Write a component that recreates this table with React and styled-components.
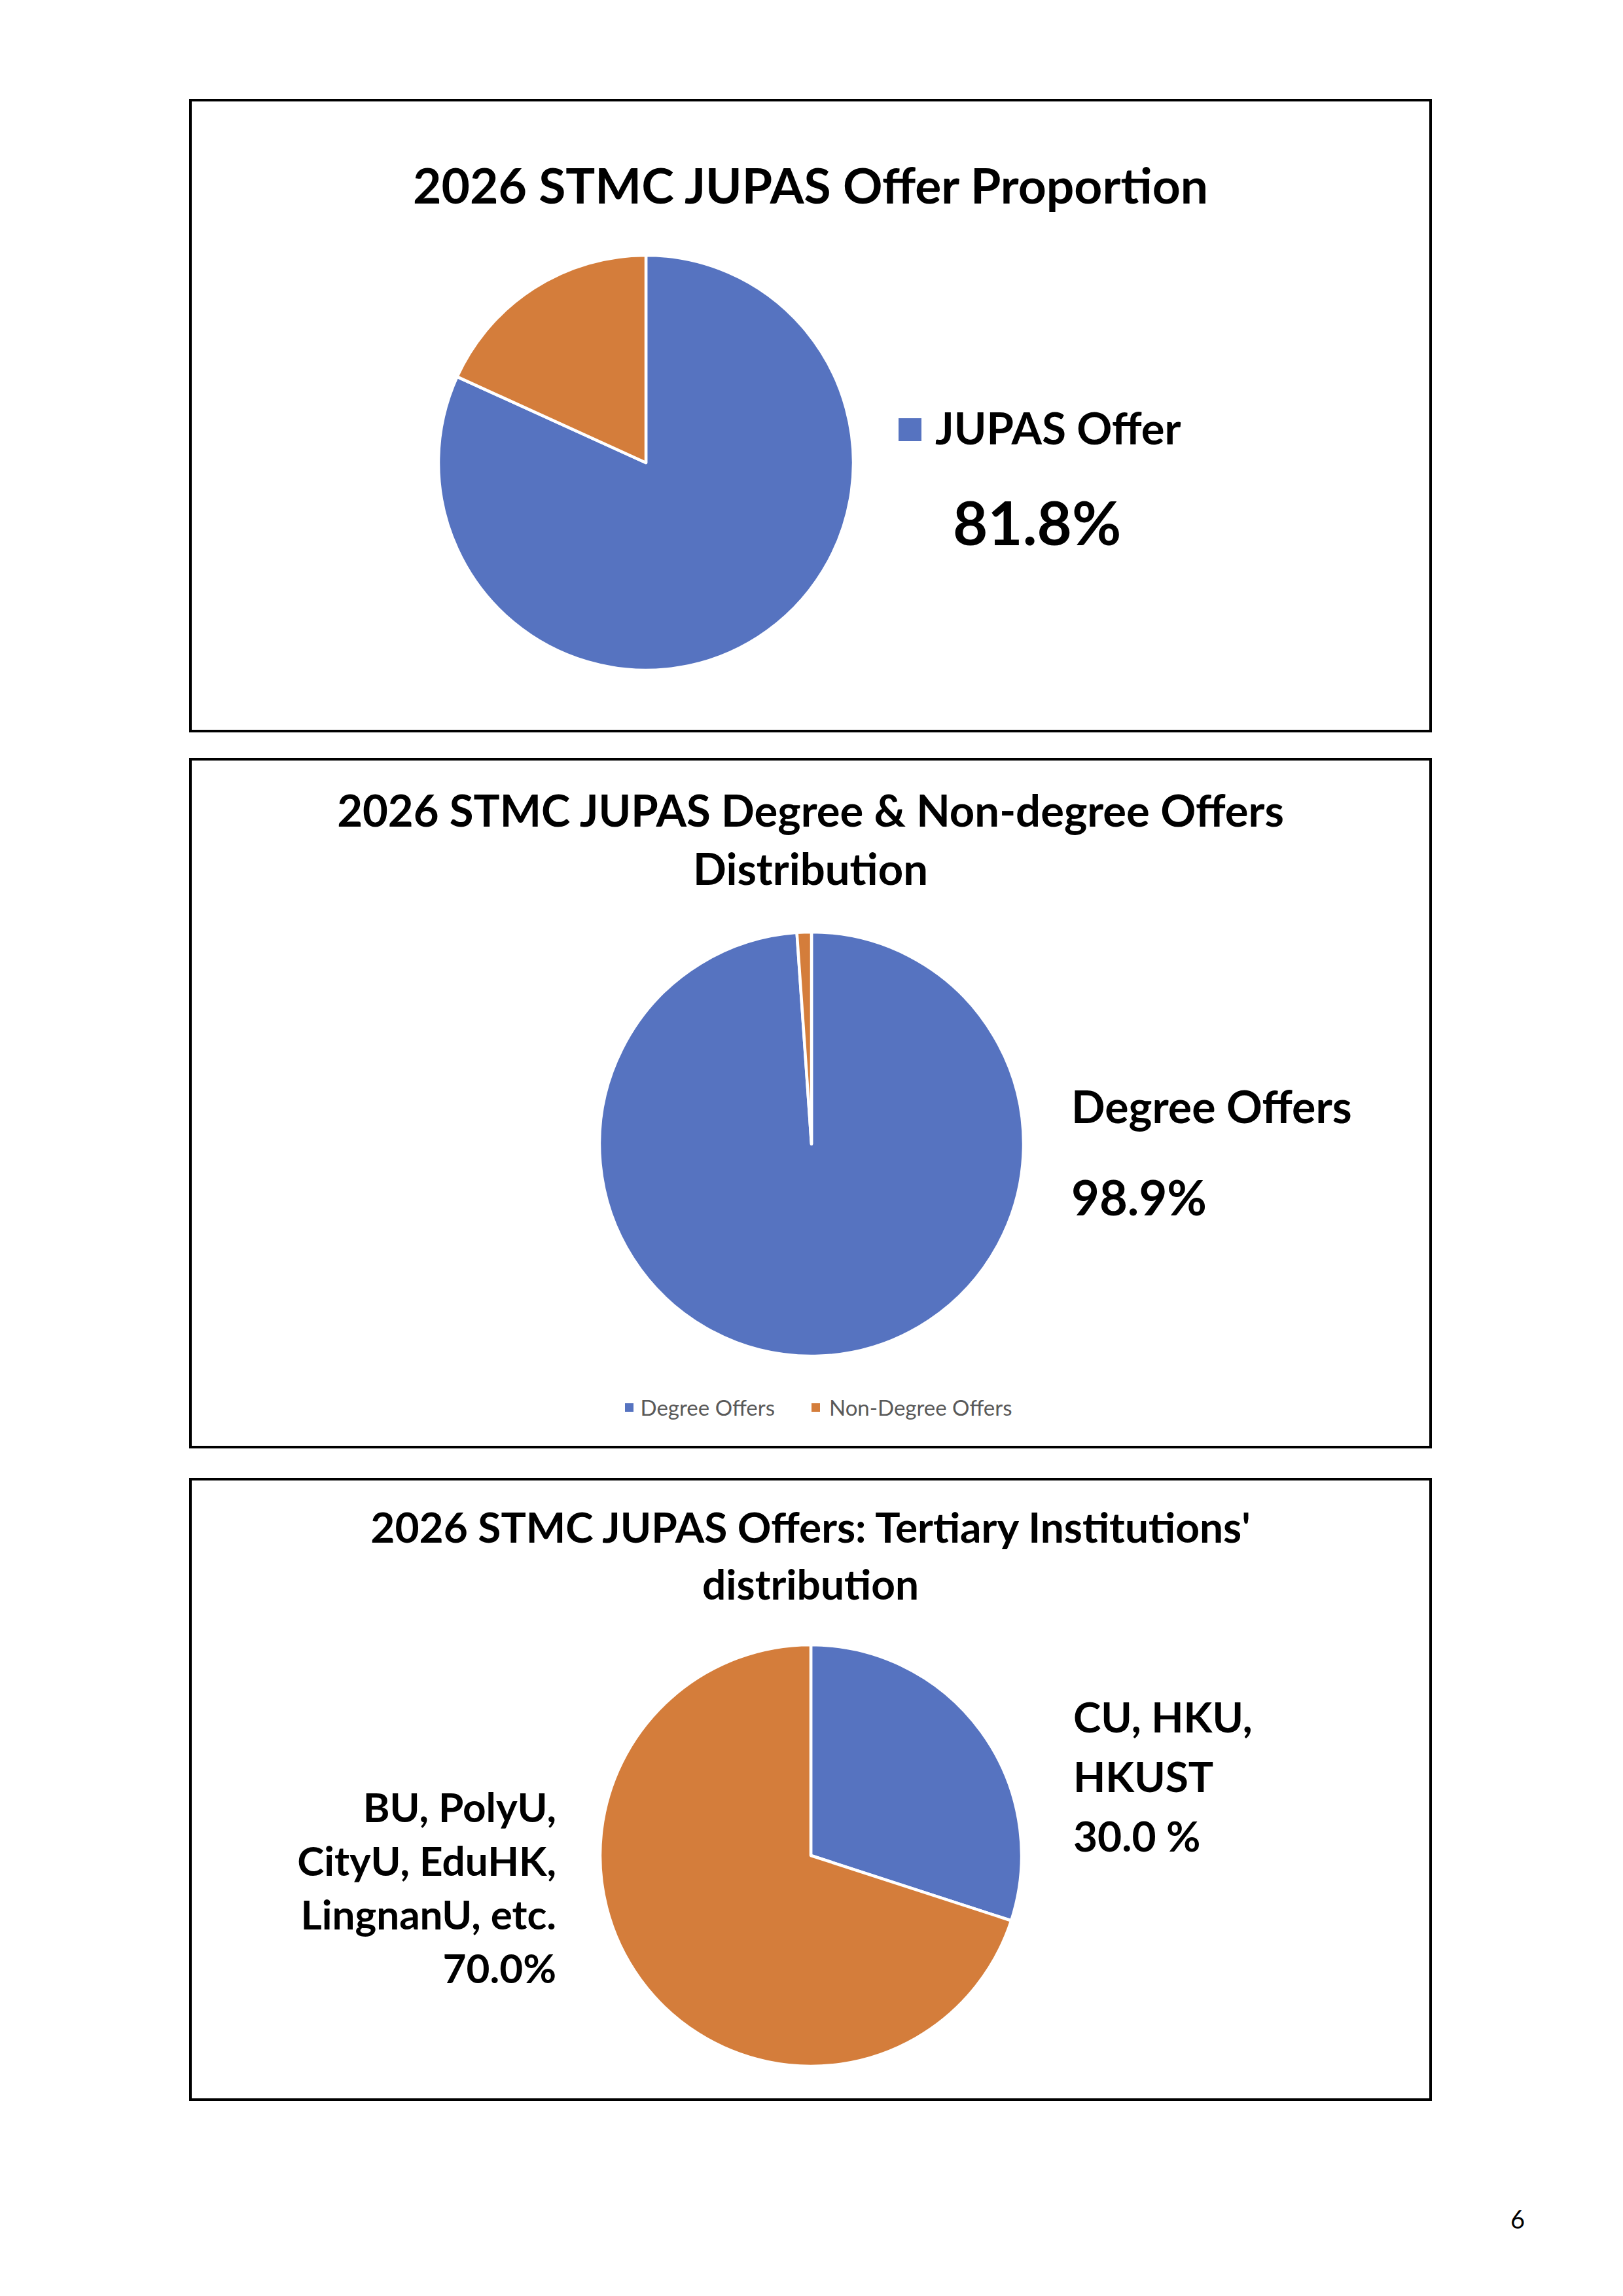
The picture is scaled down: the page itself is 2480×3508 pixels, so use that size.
import React from 'react';
import styled, { createGlobalStyle } from 'styled-components';

const BLUE = '#5673c0';
const ORANGE = '#d47d3b';

const Global = createGlobalStyle`
  html, body { margin: 0; padding: 0; background: #fff; }
  body { font-family: Lato, "Noto Sans", sans-serif; color: #000; }
`;

const Page = styled.div`
  width: 2480px;
  min-height: 3508px;
  box-sizing: border-box;
  padding: 151px 0 0 289px;
  display: flex;
  flex-direction: column;
`;

const Panel = styled.section`
  box-sizing: border-box;
  width: 1899px;
  height: ${(p) => p.$h}px;
  margin-top: ${(p) => p.$mt || 0}px;
  border: 4px solid #000;
  padding-top: ${(p) => p.$pt}px;
  display: flex;
  flex-direction: column;
`;

const Title = styled.h2`
  margin: 0;
  font-family: Lato, "Noto Sans", sans-serif;
  font-weight: 700;
  text-align: center;
  font-size: ${(p) => p.$fs}px;
  line-height: ${(p) => p.$lh}px;
  color: #000;
`;

const ChartRow = styled.div`
  display: flex;
  align-items: flex-start;
  margin-top: ${(p) => p.$mt}px;
  padding-left: ${(p) => p.$pl || 0}px;
  gap: ${(p) => p.$gap}px;
`;

const LabelColumn = styled.div`
  display: flex;
  flex-direction: column;
  align-items: ${(p) => (p.$right ? 'flex-end' : 'flex-start')};
  text-align: ${(p) => (p.$right ? 'right' : 'left')};
  margin-top: ${(p) => p.$mt}px;
  margin-left: ${(p) => p.$ml || 0}px;
  width: ${(p) => (p.$w ? `${p.$w}px` : 'auto')};
  flex: none;
`;

const BigLabel = styled.div`
  font-weight: 700;
  font-size: ${(p) => p.$fs}px;
  line-height: ${(p) => p.$lh}px;
  margin-top: ${(p) => p.$mt || 0}px;
  margin-left: ${(p) => p.$ml || 0}px;
  white-space: nowrap;
`;

const LegendEntry = styled.div`
  display: flex;
  align-items: center;
  gap: ${(p) => p.$gap}px;
`;

const Swatch = styled.span`
  display: inline-block;
  width: ${(p) => p.$size}px;
  height: ${(p) => p.$size}px;
  background: ${(p) => p.$color};
  margin-top: ${(p) => p.$mt || 0}px;
  flex: none;
`;

const SmallLegend = styled.div`
  display: flex;
  justify-content: center;
  align-items: center;
  gap: 56px;
  margin-top: ${(p) => p.$mt}px;
  padding-left: 24px;
  font-size: 33px;
  line-height: 40px;
  color: #595959;
`;

const Footer = styled.div`
  width: 2041px;
  display: flex;
  justify-content: flex-end;
  margin-top: 157px;
  font-size: 38px;
  line-height: 46px;
  color: #000;
`;

function Pie({ r, slices }) {
  const pad = 4;
  const R = r + 2;
  const size = 2 * r + 2 * pad;
  const c = size / 2;
  const total = slices.reduce((s, x) => s + x.value, 0);
  let acc = 0;
  const pt = (a) => [c + R * Math.sin(a), c - R * Math.cos(a)];
  const paths = slices.map((s, i) => {
    const a0 = (acc / total) * Math.PI * 2;
    acc += s.value;
    const a1 = (acc / total) * Math.PI * 2;
    const [x0, y0] = pt(a0);
    const [x1, y1] = pt(a1);
    const large = a1 - a0 > Math.PI ? 1 : 0;
    const d = `M ${c} ${c} L ${x0} ${y0} A ${R} ${R} 0 ${large} 1 ${x1} ${y1} Z`;
    return <path key={i} d={d} fill={s.color} stroke="#fff" strokeWidth="4.5" strokeLinejoin="round" />;
  });
  return (
    <svg width={size} height={size} viewBox={`0 0 ${size} ${size}`} style={{ flex: 'none', display: 'block' }}>
      {paths}
    </svg>
  );
}

export default function App() {
  return (
    <>
      <Global />
      <Page>
        <Panel $h={968} $pt={82}>
          <Title $fs={75} $lh={90}>2026 STMC JUPAS Offer Proportion</Title>
          <ChartRow $mt={61} $pl={375} $gap={67}>
            <Pie r={315} slices={[{ value: 81.8, color: BLUE }, { value: 18.2, color: ORANGE }]} />
            <LabelColumn $mt={223}>
              <LegendEntry $gap={21}>
                <Swatch $size={35} $color={BLUE} $mt={6} />
                <BigLabel $fs={67} $lh={84}>JUPAS Offer</BigLabel>
              </LegendEntry>
              <BigLabel $fs={92} $lh={100} $mt={53} $ml={83}>81.8%</BigLabel>
            </LabelColumn>
          </ChartRow>
        </Panel>

        <Panel $h={1055} $mt={39} $pt={31}>
          <Title $fs={67} $lh={89}>
            2026 STMC JUPAS Degree &amp; Non-degree Offers
            <br />
            Distribution
          </Title>
          <ChartRow $mt={51} $pl={621} $gap={71}>
            <Pie r={322} slices={[{ value: 98.9, color: BLUE }, { value: 1.1, color: ORANGE }]} />
            <LabelColumn $mt={226}>
              <BigLabel $fs={68} $lh={84}>Degree Offers</BigLabel>
              <BigLabel $fs={74} $lh={90} $mt={52}>98.9%</BigLabel>
            </LabelColumn>
          </ChartRow>
          <SmallLegend $mt={56}>
            <LegendEntry $gap={11}>
              <Swatch $size={13} $color={BLUE} />
              <span>Degree Offers</span>
            </LegendEntry>
            <LegendEntry $gap={14}>
              <Swatch $size={13} $color={ORANGE} />
              <span>Non-Degree Offers</span>
            </LegendEntry>
          </SmallLegend>
        </Panel>

        <Panel $h={952} $mt={45} $pt={27}>
          <Title $fs={64} $lh={87}>
            2026 STMC JUPAS Offers: Tertiary Institutions'
            <br />
            distribution
          </Title>
          <ChartRow $mt={48} $gap={65}>
            <LabelColumn $right $w={557} $mt={208}>
              <BigLabel $fs={62} $lh={82}>BU, PolyU,</BigLabel>
              <BigLabel $fs={62} $lh={82}>CityU, EduHK,</BigLabel>
              <BigLabel $fs={62} $lh={82}>LingnanU, etc.</BigLabel>
              <BigLabel $fs={62} $lh={82}>70.0%</BigLabel>
            </LabelColumn>
            <Pie r={320} slices={[{ value: 30, color: BLUE }, { value: 70, color: ORANGE }]} />
            <LabelColumn $mt={66} $ml={12}>
              <BigLabel $fs={64} $lh={91}>CU, HKU,</BigLabel>
              <BigLabel $fs={64} $lh={91}>HKUST</BigLabel>
              <BigLabel $fs={64} $lh={91}>30.0 %</BigLabel>
            </LabelColumn>
          </ChartRow>
        </Panel>

        <Footer>6</Footer>
      </Page>
    </>
  );
}
